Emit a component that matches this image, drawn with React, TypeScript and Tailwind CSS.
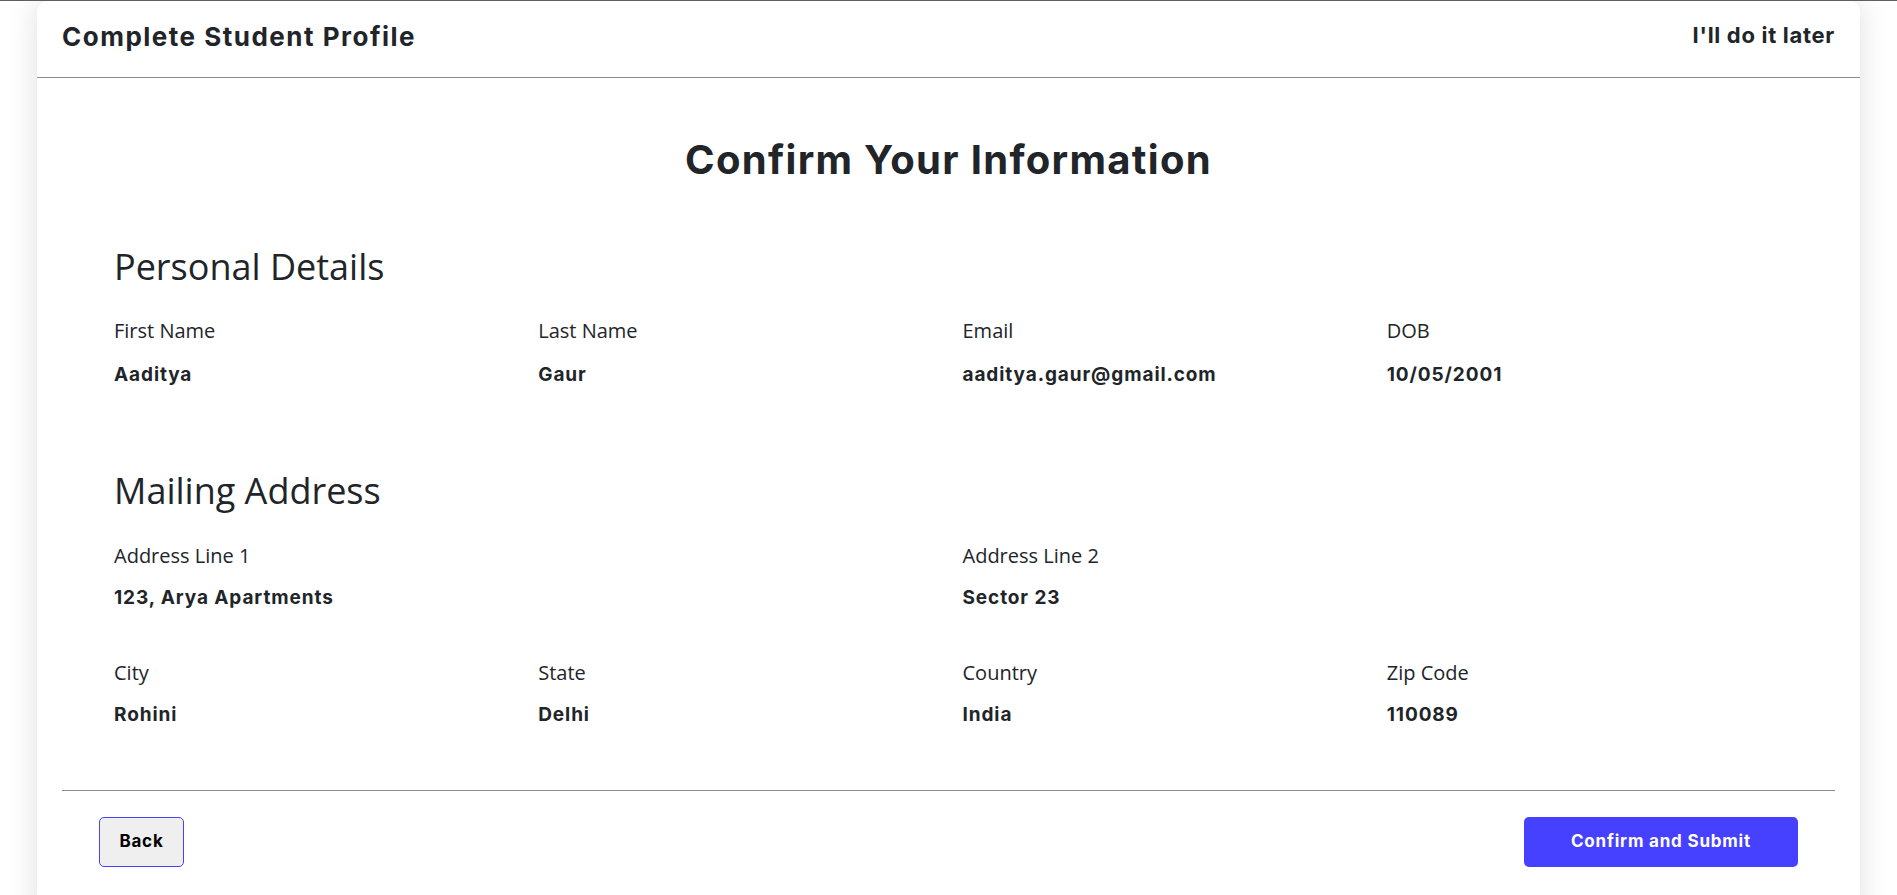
import React from "react";

const personal = [
  { label: "First Name", value: "Aaditya" },
  { label: "Last Name", value: "Gaur" },
  { label: "Email", value: "aaditya.gaur@gmail.com" },
  { label: "DOB", value: "10/05/2001" },
];

const cityRow = [
  { label: "City", value: "Rohini" },
  { label: "State", value: "Delhi" },
  { label: "Country", value: "India" },
  { label: "Zip Code", value: "110089" },
];

function Field({ label, value, gap, span }: { label: string; value: string; gap: string; span?: boolean }) {
  return (
    <div className={span ? "col-span-2" : ""}>
      <div className="font-['Open_Sans',sans-serif] text-[20px] leading-[30px] text-[#212529]">{label}</div>
      <div className={`${gap} font-['Inter',sans-serif] font-bold text-[19px] leading-[28px] text-[#212529] tracking-[0.9px]`}>
        {value}
      </div>
    </div>
  );
}

export default function App() {
  return (
    <div className="min-h-screen bg-white border-t border-[#5f5f5f] overflow-hidden">
      <div className="mx-[37px] bg-white rounded-t-[10px] shadow-[0_0_30px_rgba(0,0,0,0.13)] pb-[60px]">
        <div className="h-[77px] px-[25px] flex items-center justify-between border-b border-[#8c8c8c]">
          <div className="font-['Inter',sans-serif] font-bold text-[26px] text-[#212529] tracking-[1.5px] mt-[-5px]">
            Complete Student Profile
          </div>
          <div className="font-['Inter',sans-serif] font-bold text-[22px] text-[#212529] tracking-[0.7px] mt-[-8px]">
            I'll do it later
          </div>
        </div>

        <h1 className="mt-[58px] text-center font-['Inter',sans-serif] font-bold text-[40px] leading-[48px] text-[#212529] tracking-[1.3px]">
          Confirm Your Information
        </h1>

        <div className="ml-[77px] w-[1697px]">
          <h2 className="mt-[61px] font-['Open_Sans',sans-serif] text-[36px] leading-[43px] text-[#212529]">
            Personal Details
          </h2>
          <div className="mt-[28px] grid grid-cols-4">
            {personal.map((f) => (
              <Field key={f.label} label={f.label} value={f.value} gap="mt-[15px]" />
            ))}
          </div>

          <h2 className="mt-[80px] font-['Open_Sans',sans-serif] text-[36px] leading-[43px] text-[#212529]">
            Mailing Address
          </h2>
          <div className="mt-[29px] grid grid-cols-4 gap-y-[46px]">
            <Field label="Address Line 1" value="123, Arya Apartments" gap="mt-[13px]" span />
            <Field label="Address Line 2" value="Sector 23" gap="mt-[13px]" span />
            {cityRow.map((f) => (
              <Field key={f.label} label={f.label} value={f.value} gap="mt-[13px]" />
            ))}
          </div>
        </div>

        <div className="mx-[25px] mt-[61px] border-t border-[#8c8c8c]">
          <div className="mt-[26px] px-[37px] flex justify-between items-center">
            <button className="w-[85px] h-[50px] border border-[#4640ff] rounded-[5px] bg-[#efefef] font-['Inter',sans-serif] font-bold text-[17px] tracking-[0.8px] text-black">
              Back
            </button>
            <button className="w-[274px] h-[50px] rounded-[5px] bg-[#4640ff] font-['Inter',sans-serif] font-bold text-[17px] tracking-[0.8px] text-white">
              Confirm and Submit
            </button>
          </div>
        </div>
      </div>
    </div>
  );
}
